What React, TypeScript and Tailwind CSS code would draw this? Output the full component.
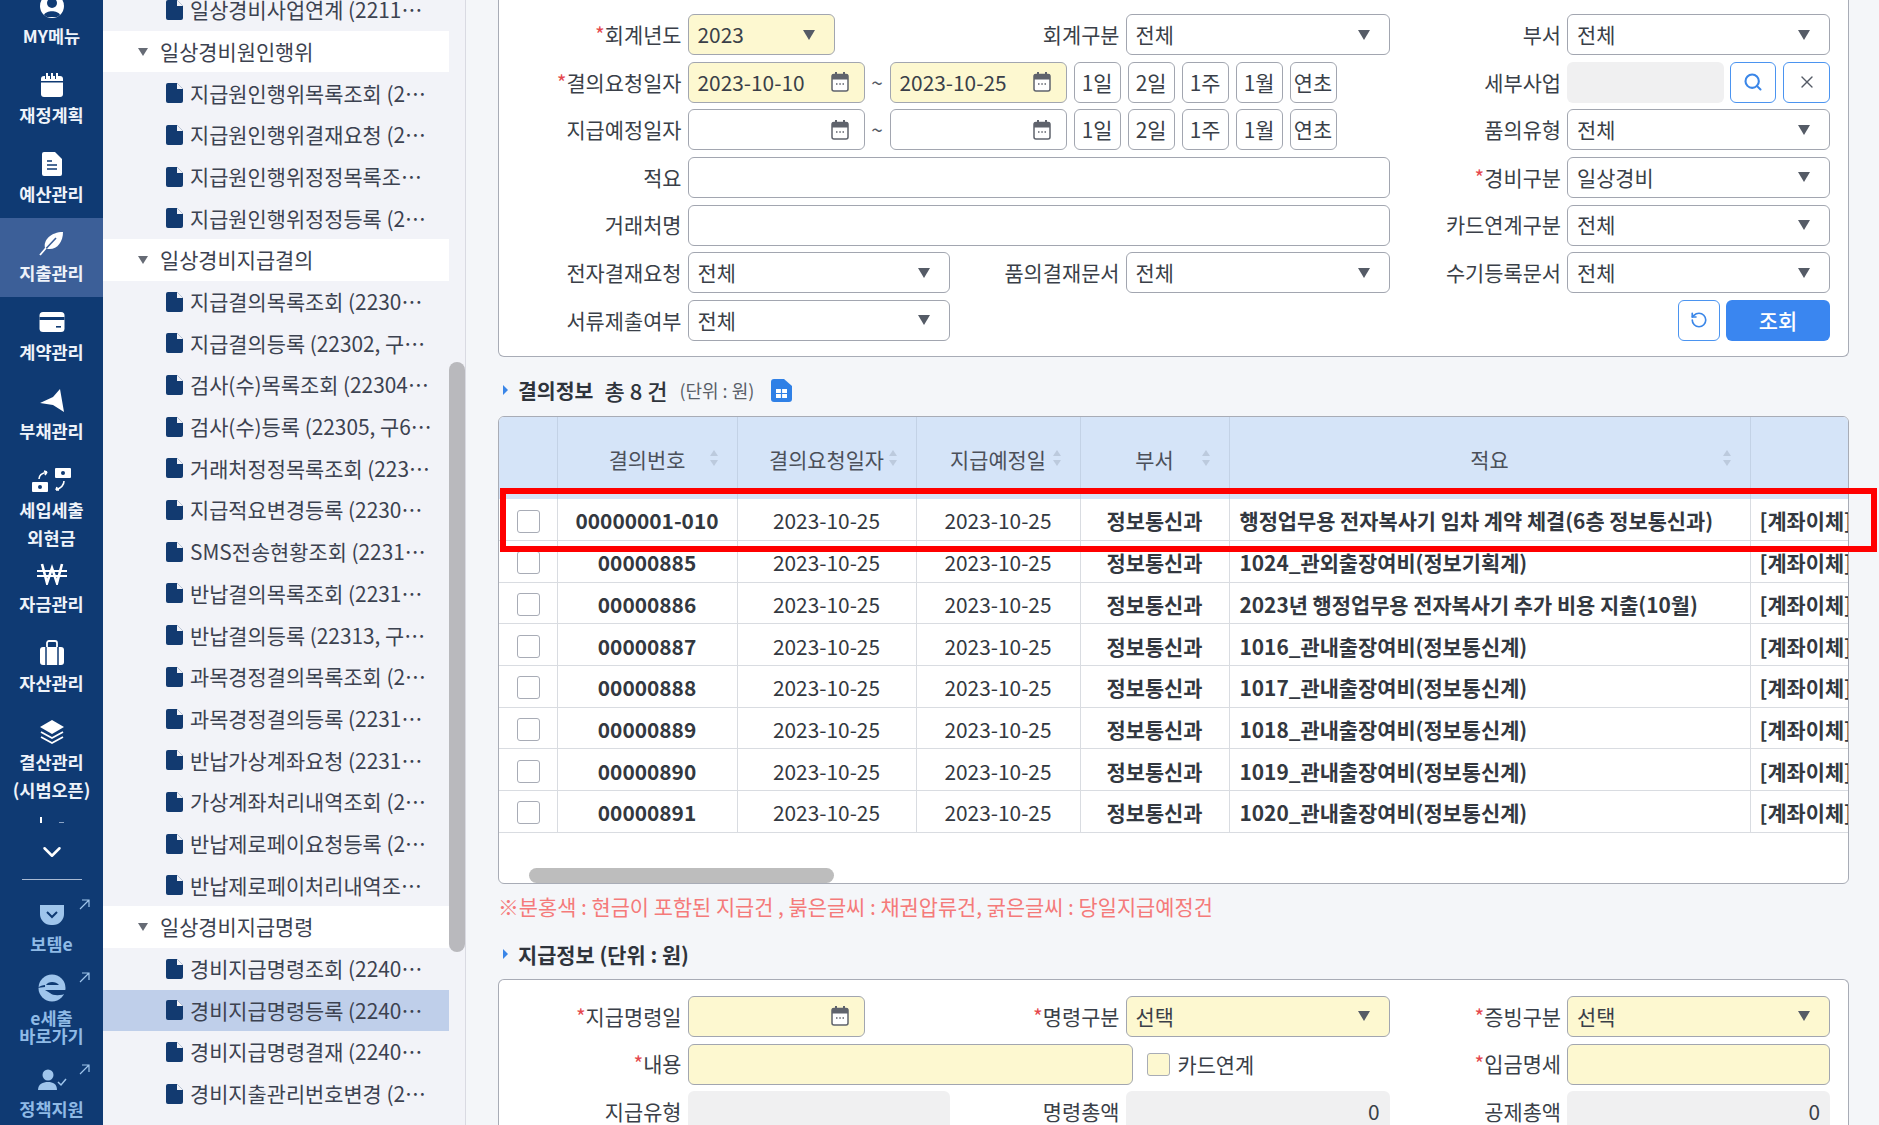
import type { ReactNode } from "react";
import { ChevronDown, RotateCcw, Search, X } from "lucide-react";

// left navigation icons, drawn to match the app's own icon set
function MyIcon() {
  return (
    <svg width="24" height="26" viewBox="0 0 24 26">
      <circle cx="12" cy="13" r="12" fill="#fff" />
      <circle cx="12" cy="10" r="5" fill="#0f3a73" />
      <path d="M4 22c2-5 14-5 16 0l-3 2H7z" fill="#0f3a73" />
    </svg>
  );
}

function PlanIcon() {
  return (
    <svg width="24" height="26" viewBox="0 0 24 26">
      <rect x="1" y="4" width="22" height="21" rx="3" fill="#fff" />
      <rect x="1" y="9" width="22" height="1.5" fill="#0f3a73" />
      <path d="M7 1v6M12 1v6M17 1v6" stroke="#fff" strokeWidth="2" />
      <path d="M5.5 4v3M10.5 4v3M15.5 4v3" stroke="#0f3a73" strokeWidth="1" />
    </svg>
  );
}

function BudgetIcon() {
  return (
    <svg width="22" height="26" viewBox="0 0 22 26">
      <path d="M3 1h11l7 7v15a2 2 0 0 1-2 2H3a2 2 0 0 1-2-2V3a2 2 0 0 1 2-2z" fill="#fff" />
      <path d="M6 10h5M6 14h10M6 18h10" stroke="#0f3a73" strokeWidth="1.6" />
    </svg>
  );
}

function FeatherIcon() {
  return (
    <svg width="26" height="26" viewBox="0 0 26 26">
      <path d="M6 18C4 10 12 2 24 2c0 10-6 18-15 17z" fill="#fff" />
      <path d="M1 25 17 8" stroke="#3c5f98" strokeWidth="1.6" />
      <path d="M1 25l6-7" stroke="#fff" strokeWidth="1.8" />
    </svg>
  );
}

function CardIcon() {
  return (
    <svg width="26" height="22" viewBox="0 0 26 22">
      <rect x="0.5" y="1" width="25" height="20" rx="3.5" fill="#fff" />
      <rect x="0.5" y="6" width="25" height="3" fill="#0f3a73" />
      <rect x="17" y="15" width="5" height="1.6" fill="#0f3a73" />
    </svg>
  );
}

function PlaneIcon() {
  return (
    <svg width="26" height="26" viewBox="0 0 26 26">
      <path d="M1 15 14 9 21 1 25 24 14 17z" fill="#fff" />
    </svg>
  );
}

function ExchangeIcon() {
  return (
    <svg width="42" height="26" viewBox="0 0 42 26">
      <rect x="24" y="1" width="16" height="10" rx="1" fill="#fff" />
      <circle cx="32" cy="6" r="2" fill="#0f3a73" />
      <rect x="1" y="15" width="16" height="10" rx="1" fill="#fff" />
      <circle cx="9" cy="20" r="2" fill="#0f3a73" />
      <path d="M8 12c0-4 3-6 8-7M16 5l-3-1M16 5l-2 3M33 14c0 4-3 7-8 9M25 23l3 0M25 23l1-3" stroke="#fff" strokeWidth="1.6" fill="none" />
    </svg>
  );
}

function WonIcon() {
  return (
    <svg width="30" height="22" viewBox="0 0 30 22">
      <path d="M5 1l5 19 5-15 5 15 5-19" stroke="#fff" strokeWidth="2.6" fill="none" />
      <path d="M0 8h30M0 13h30" stroke="#fff" strokeWidth="2" />
    </svg>
  );
}

function CaseIcon() {
  return (
    <svg width="26" height="26" viewBox="0 0 26 26">
      <path d="M8 7V3a2 2 0 0 1 2-2h6a2 2 0 0 1 2 2v4" stroke="#fff" strokeWidth="1.8" fill="none" />
      <rect x="1" y="7" width="24" height="18" rx="3" fill="#fff" />
      <path d="M7 7v18M19 7v18" stroke="#0f3a73" strokeWidth="1.5" />
    </svg>
  );
}

function LayersIcon() {
  return (
    <svg width="26" height="26" viewBox="0 0 26 26">
      <path d="M13 1 25 8 13 15 1 8z" fill="#fff" />
      <path d="M2 13l11 6 11-6M2 18l11 6 11-6" stroke="#fff" strokeWidth="1.8" fill="none" />
    </svg>
  );
}

function PocketIcon() {
  return (
    <svg width="26" height="22" viewBox="0 0 26 22">
      <path d="M1 1h24v9a11 11 0 0 1-11 11h-2A11 11 0 0 1 1 10z" fill="#9fc5ec" />
      <path d="M8 8l5 5 5-5" stroke="#0f3a73" strokeWidth="2" fill="none" />
    </svg>
  );
}

function ELogoIcon() {
  return (
    <svg width="30" height="28" viewBox="0 0 30 28">
      <circle cx="15" cy="14" r="13.5" fill="#9fc5ec" />
      <path d="M9 11c2-4 10-4 13 0z" fill="#0f3a73" />
      <path d="M8 16h22v3c-6 3-14 3-17 0z" fill="#0f3a73" />
      <path d="M0 14c3-2 6-3 8-3v2z" fill="#0f3a73" />
    </svg>
  );
}

function PersonCheckIcon() {
  return (
    <svg width="30" height="24" viewBox="0 0 30 24">
      <circle cx="11" cy="7" r="5.5" fill="#9fc5ec" />
      <path d="M1 22c0-6 5-8 10-8s9 2 9 8z" fill="#9fc5ec" />
      <path d="M21 14l3 3 5-6" stroke="#9fc5ec" strokeWidth="1.5" fill="none" />
    </svg>
  );
}

function ArrowOut() {
  return (
    <svg width="11" height="11" viewBox="0 0 11 11" className="absolute right-[13px] top-0">
      <path d="M1 10 10 1M3 1h7v7" stroke="#9fc5ec" strokeWidth="1.2" fill="none" />
    </svg>
  );
}

const navItems: { label: string[]; icon: ReactNode; active?: boolean }[] = [
  { label: ["MY메뉴"], icon: <MyIcon /> },
  { label: ["재정계획"], icon: <PlanIcon /> },
  { label: ["예산관리"], icon: <BudgetIcon /> },
  { label: ["지출관리"], icon: <FeatherIcon />, active: true },
  { label: ["계약관리"], icon: <CardIcon /> },
  { label: ["부채관리"], icon: <PlaneIcon /> },
  { label: ["세입세출", "외현금"], icon: <ExchangeIcon /> },
  { label: ["자금관리"], icon: <WonIcon /> },
  { label: ["자산관리"], icon: <CaseIcon /> },
  { label: ["결산관리", "(시범오픈)"], icon: <LayersIcon /> },
];

function Sidebar() {
  return (
    <aside className="w-[103px] shrink-0 bg-[#0f3a73] text-center text-[17.5px] font-bold text-[#eef3fa]">
      <div className="-mt-[19px]">
        {navItems.map((item) => (
          <div
            key={item.label[0]}
            className={`pt-[9px] ${item.label.length > 1 ? "h-[94px]" : "h-[79px]"} ${item.active ? "bg-[#3c5f98]" : ""}`}
          >
            <div className="flex h-[32px] items-center justify-center">{item.icon}</div>
            {item.label.map((line) => (
              <div key={line} className="leading-[28px] whitespace-nowrap">
                {line}
              </div>
            ))}
          </div>
        ))}
      </div>
      {/* cut off next menu item */}
      <div className="flex h-[14px] justify-center gap-[17px] pt-[16px]">
        <span className="h-[6px] w-[2px] bg-white" />
        <span className="mt-[5px] h-px w-[5px] bg-[#8aa3c5]" />
      </div>
      <div className="mt-[20px] flex justify-center">
        <ChevronDown size={30} strokeWidth={2} className="text-white" />
      </div>
      <div className="mx-auto mt-[12px] h-px w-[60px] bg-[#a9bad3]" />
      <div className="text-[#8fbae6]">
        <div className="relative mt-[19px]">
          <ArrowOut />
          <div className="flex h-[32px] items-center justify-center">
            <PocketIcon />
          </div>
          <div className="leading-[26px]">보템e</div>
        </div>
        <div className="relative mt-[15px]">
          <ArrowOut />
          <div className="flex h-[32px] items-center justify-center">
            <ELogoIcon />
          </div>
          <div className="mt-[5px] leading-[18px]">e세출</div>
          <div className="leading-[18px]">바로가기</div>
        </div>
        <div className="relative mt-[19px]">
          <ArrowOut />
          <div className="flex h-[32px] items-center justify-center">
            <PersonCheckIcon />
          </div>
          <div className="leading-[26px]">정책지원</div>
        </div>
      </div>
    </aside>
  );
}

type TreeRow = { text: string; group?: boolean; selected?: boolean };

const treeRows: TreeRow[] = [
  { text: "일상경비사업연계 (2211⋯" },
  { text: "일상경비원인행위", group: true },
  { text: "지급원인행위목록조회 (2⋯" },
  { text: "지급원인행위결재요청 (2⋯" },
  { text: "지급원인행위정정목록조⋯" },
  { text: "지급원인행위정정등록 (2⋯" },
  { text: "일상경비지급결의", group: true },
  { text: "지급결의목록조회 (2230⋯" },
  { text: "지급결의등록 (22302, 구⋯" },
  { text: "검사(수)목록조회 (22304⋯" },
  { text: "검사(수)등록 (22305, 구6⋯" },
  { text: "거래처정정목록조회 (223⋯" },
  { text: "지급적요변경등록 (2230⋯" },
  { text: "SMS전송현황조회 (2231⋯" },
  { text: "반납결의목록조회 (2231⋯" },
  { text: "반납결의등록 (22313, 구⋯" },
  { text: "과목경정결의목록조회 (2⋯" },
  { text: "과목경정결의등록 (2231⋯" },
  { text: "반납가상계좌요청 (2231⋯" },
  { text: "가상계좌처리내역조회 (2⋯" },
  { text: "반납제로페이요청등록 (2⋯" },
  { text: "반납제로페이처리내역조⋯" },
  { text: "일상경비지급명령", group: true },
  { text: "경비지급명령조회 (2240⋯" },
  { text: "경비지급명령등록 (2240⋯", selected: true },
  { text: "경비지급명령결재 (2240⋯" },
  { text: "경비지출관리번호변경 (2⋯" },
];

function TreePanel() {
  return (
    <div className="flex w-[363px] shrink-0 border-r border-[#d9dae2] bg-[#f2f3f8]">
      <div className="-mt-[11px] w-[346px] shrink-0">
        {treeRows.map((row) =>
          row.group ? (
            <div key={row.text} className="flex h-[41.7px] items-center bg-white pl-[35px] text-[#3c4250]">
              <span className="mr-[12px] h-0 w-0 border-x-[5.5px] border-t-[8px] border-x-transparent border-t-[#666b75]" />
              <span>{row.text}</span>
            </div>
          ) : (
            <div
              key={row.text}
              className={`flex h-[41.7px] items-center pl-[63px] whitespace-nowrap text-[#3c4250] ${row.selected ? "bg-[#bfcfea]" : ""}`}
            >
              <svg width="17" height="20" viewBox="0 0 17 20" className="mr-[7px] shrink-0">
                <path d="M2 0h9l6 6v12a2 2 0 0 1-2 2H2a2 2 0 0 1-2-2V2a2 2 0 0 1 2-2z" fill="#123a70" />
                <path d="M11 0v6h6" fill="#f2f3f8" />
              </svg>
              <span>{row.text}</span>
            </div>
          ),
        )}
      </div>
      <div className="flex-1 pt-[362px]">
        <div className="h-[590px] rounded-full bg-[#b9b9bd]" />
      </div>
    </div>
  );
}

function Label({ children, width, required }: { children: ReactNode; width: string; required?: boolean }) {
  return (
    <div className={`${width} shrink-0 pr-[6px] text-right whitespace-nowrap text-[#3a3f48]`}>
      {required && <span className="text-[#e5484d]">*</span>}
      {children}
    </div>
  );
}

function Caret() {
  return <span className="h-0 w-0 border-x-[6.5px] border-t-[10px] border-x-transparent border-t-[#555b66]" />;
}

function Select({ value, width, yellow }: { value: string; width: string; yellow?: boolean }) {
  return (
    <div
      className={`${width} flex h-[41px] shrink-0 items-center justify-between rounded-[6px] border-[1.5px] border-[#a2a6b0] pr-[19px] pl-[9px] text-[#3a3f48] ${yellow ? "bg-[#fdf8d0]" : "bg-white"}`}
    >
      <span>{value}</span>
      <Caret />
    </div>
  );
}

function CalendarIcon() {
  return (
    <svg width="18" height="20" viewBox="0 0 18 20">
      <rect x="4" y="0" width="2" height="4" fill="#5f636c" />
      <rect x="12" y="0" width="2" height="4" fill="#5f636c" />
      <rect x="1" y="2.5" width="16" height="16.5" rx="2" fill="#fff" stroke="#5f636c" strokeWidth="1.5" />
      <rect x="1" y="2.5" width="16" height="5" fill="#5f636c" />
      <path d="M5 12h1.5M8.3 12h1.5M11.5 12h1.5" stroke="#5f636c" strokeWidth="1.5" />
    </svg>
  );
}

function DateField({ value, yellow }: { value?: string; yellow?: boolean }) {
  return (
    <div
      className={`flex h-[41px] w-[177px] shrink-0 items-center justify-between rounded-[6px] border-[1.5px] border-[#a2a6b0] pr-[15px] pl-[9px] whitespace-nowrap text-[#3a3f48] ${yellow ? "bg-[#fdf8d0]" : "bg-white"}`}
    >
      <span>{value}</span>
      <CalendarIcon />
    </div>
  );
}

function DateRange({ from, to, yellow }: { from?: string; to?: string; yellow?: boolean }) {
  return (
    <>
      <DateField value={from} yellow={yellow} />
      <span className="w-[25px] shrink-0 text-center text-[#555b66]">~</span>
      <DateField value={to} yellow={yellow} />
      <div className="ml-[7px] flex gap-[7px]">
        {["1일", "2일", "1주", "1월", "연초"].map((t) => (
          <div
            key={t}
            className="flex h-[41px] w-[47px] items-center justify-center rounded-[6px] border-[1.5px] border-[#a2a6b0] bg-white whitespace-nowrap text-[#3a3f48]"
          >
            {t}
          </div>
        ))}
      </div>
    </>
  );
}

function TextField({ width, yellow }: { width: string; yellow?: boolean }) {
  return (
    <div
      className={`${width} h-[41px] shrink-0 rounded-[6px] border-[1.5px] border-[#a2a6b0] ${yellow ? "bg-[#fdf8d0]" : "bg-white"}`}
    />
  );
}

function Disabled({ width, value }: { width: string; value?: string }) {
  return (
    <div className={`${width} h-[41px] shrink-0 rounded-[6px] bg-[#f0f0f1] pr-[10px] text-right leading-[41px] text-[#3a3f48]`}>
      {value}
    </div>
  );
}

function Row({ children, right }: { children: ReactNode; right?: ReactNode }) {
  return (
    <div className="flex h-[41px] items-center">
      {children}
      <div className="ml-auto flex items-center">{right}</div>
    </div>
  );
}

function RightField({ label, required, children }: { label: string; required?: boolean; children: ReactNode }) {
  return (
    <>
      <Label width="w-[176px]" required={required}>
        {label}
      </Label>
      {children}
    </>
  );
}

function SearchPanel() {
  return (
    <div className="flex flex-col gap-[6.67px] rounded-b-[6px] border-[1.5px] border-t-0 border-[#a8acb6] bg-white pt-[14px] pr-[18px] pb-[15px]">
      <Row right={<RightField label="부서"><Select value="전체" width="w-[263px]" /></RightField>}>
        <Label width="w-[188.5px]" required>회계년도</Label>
        <Select value="2023" width="w-[147px]" yellow />
        <Label width="w-[291px]">회계구분</Label>
        <Select value="전체" width="w-[264px]" />
      </Row>
      <Row
        right={
          <RightField label="세부사업">
            <Disabled width="w-[157px]" />
            <div className="ml-[6px] flex h-[41px] w-[46px] items-center justify-center rounded-[6px] border-[1.5px] border-[#4b94f0] bg-white">
              <Search size={20} strokeWidth={2.5} className="text-[#3a86e8]" />
            </div>
            <div className="ml-[7px] flex h-[41px] w-[47px] items-center justify-center rounded-[6px] border-[1.5px] border-[#4b94f0] bg-white">
              <X size={20} strokeWidth={1.6} className="text-[#555b66]" />
            </div>
          </RightField>
        }
      >
        <Label width="w-[188.5px]" required>결의요청일자</Label>
        <DateRange from="2023-10-10" to="2023-10-25" yellow />
      </Row>
      <Row right={<RightField label="품의유형"><Select value="전체" width="w-[263px]" /></RightField>}>
        <Label width="w-[188.5px]">지급예정일자</Label>
        <DateRange />
      </Row>
      <Row right={<RightField label="경비구분" required><Select value="일상경비" width="w-[263px]" /></RightField>}>
        <Label width="w-[188.5px]">적요</Label>
        <TextField width="w-[702px]" />
      </Row>
      <Row right={<RightField label="카드연계구분"><Select value="전체" width="w-[263px]" /></RightField>}>
        <Label width="w-[188.5px]">거래처명</Label>
        <TextField width="w-[702px]" />
      </Row>
      <Row right={<RightField label="수기등록문서"><Select value="전체" width="w-[263px]" /></RightField>}>
        <Label width="w-[188.5px]">전자결재요청</Label>
        <Select value="전체" width="w-[262px]" />
        <Label width="w-[176px]">품의결재문서</Label>
        <Select value="전체" width="w-[264px]" />
      </Row>
      <Row
        right={
          <>
            <div className="flex h-[41px] w-[42px] items-center justify-center rounded-[6px] border-[1.5px] border-[#4b94f0] bg-white">
              <RotateCcw size={18} strokeWidth={2.2} className="text-[#3a86e8]" />
            </div>
            <div className="ml-[6px] flex h-[41px] w-[104px] items-center justify-center rounded-[6px] bg-[#3a86f0] font-medium text-white">
              조회
            </div>
          </>
        }
      >
        <Label width="w-[188.5px]">서류제출여부</Label>
        <Select value="전체" width="w-[262px]" />
      </Row>
    </div>
  );
}

function SectionMark() {
  return <span className="mr-[10px] h-0 w-0 border-y-[5px] border-l-[5px] border-y-transparent border-l-[#3a86e8]" />;
}

function SortArrows() {
  return (
    <svg width="10" height="20" viewBox="0 0 10 20" className="absolute top-1/2 right-[18px] -translate-y-1/2">
      <path d="M5 2 9 8H1z" fill="#bccadd" />
      <path d="M5 18 1 12h8z" fill="#bccadd" />
    </svg>
  );
}

const columns = ["결의번호", "결의요청일자", "지급예정일", "부서", "적요"];

const rows = [
  ["00000001-010", "행정업무용 전자복사기 임차 계약 체결(6층 정보통신과)"],
  ["00000885", "1024_관외출장여비(정보기획계)"],
  ["00000886", "2023년 행정업무용 전자복사기 추가 비용 지출(10월)"],
  ["00000887", "1016_관내출장여비(정보통신계)"],
  ["00000888", "1017_관내출장여비(정보통신계)"],
  ["00000889", "1018_관내출장여비(정보통신계)"],
  ["00000890", "1019_관내출장여비(정보통신계)"],
  ["00000891", "1020_관내출장여비(정보통신계)"],
];

function DataTable() {
  return (
    <div className="h-[468px] overflow-hidden rounded-[6px] border-[1.5px] border-[#a8acb6] bg-white">
      <div className="h-[416px] overflow-hidden">
        <table className="w-[1449px] table-fixed border-collapse">
          <colgroup>
            <col className="w-[58px]" />
            <col className="w-[180px]" />
            <col className="w-[179px]" />
            <col className="w-[164px]" />
            <col className="w-[149px]" />
            <col className="w-[521px]" />
            <col className="w-[198px]" />
          </colgroup>
          <thead>
            <tr className="h-[82px] bg-[#d5e4f8] text-[#4b505a]">
              <th className="border-r border-[#c3d2e6]" />
              {columns.map((c) => (
                <th key={c} className="relative border-r border-[#c3d2e6] pt-[3px] font-normal">
                  {c}
                  <SortArrows />
                </th>
              ))}
              <th />
            </tr>
          </thead>
          <tbody className="text-[#333840]">
            {rows.map(([no, memo]) => (
              <tr key={no} className="h-[41.67px] border-b-[1.5px] border-[#d9dce1] whitespace-nowrap">
                <td className="border-r border-[#d9dce1] pt-[3px]">
                  <div className="mx-auto h-[23px] w-[23px] translate-x-px rounded-[3px] border-[1.5px] border-[#a8acb6] bg-white" />
                </td>
                <td className="border-r border-[#d9dce1] pt-[3px] text-center font-bold">{no}</td>
                <td className="border-r border-[#d9dce1] pt-[3px] text-center">2023-10-25</td>
                <td className="border-r border-[#d9dce1] pt-[3px] text-center">2023-10-25</td>
                <td className="border-r border-[#d9dce1] pt-[3px] text-center font-bold">정보통신과</td>
                <td className="overflow-hidden border-r border-[#d9dce1] pt-[3px] pl-[10px] font-bold">{memo}</td>
                <td className="pt-[3px] pl-[9px] font-bold">[계좌이체]</td>
              </tr>
            ))}
          </tbody>
        </table>
      </div>
      <div className="mt-[35px] ml-[30px] h-[15px] w-[305px] rounded-full bg-[#bdbdbd]" />
    </div>
  );
}

function PaymentPanel() {
  return (
    <div className="flex flex-col gap-[6.67px] rounded-t-[6px] border-[1.5px] border-b-0 border-[#a8acb6] bg-white pt-[16px] pr-[18px]">
      <Row right={<RightField label="증빙구분" required><Select value="선택" width="w-[263px]" yellow /></RightField>}>
        <Label width="w-[188.5px]" required>지급명령일</Label>
        <DateField yellow />
        <Label width="w-[261px]" required>명령구분</Label>
        <Select value="선택" width="w-[264px]" yellow />
      </Row>
      <Row right={<RightField label="입금명세" required><TextField width="w-[263px]" yellow /></RightField>}>
        <Label width="w-[188.5px]" required>내용</Label>
        <TextField width="w-[445px]" yellow />
        <div className="ml-[14px] h-[23px] w-[23px] rounded-[3px] border-[1.5px] border-[#a8acb6] bg-[#fdf8d0]" />
        <span className="mt-[2px] ml-[8px] text-[#3a3f48]">카드연계</span>
      </Row>
      <Row right={<RightField label="공제총액"><Disabled width="w-[263px]" value="0" /></RightField>}>
        <Label width="w-[188.5px]">지급유형</Label>
        <Disabled width="w-[262px]" />
        <Label width="w-[176px]">명령총액</Label>
        <Disabled width="w-[264px]" value="0" />
      </Row>
    </div>
  );
}

export default function App() {
  return (
    <div className="relative flex h-[1125px] w-full overflow-hidden bg-[#f4f6f9] font-['Noto_Sans_CJK_KR',sans-serif] text-[20.85px] leading-normal">
      <Sidebar />
      <TreePanel />
      <main className="ml-[32px] w-[1351px] shrink-0">
        <SearchPanel />
        <div className="flex h-[59px] items-center pt-[8px] pl-[5px] text-[#2f343c]">
          <SectionMark />
          <span className="text-[20.5px] font-bold">결의정보</span>
          <span className="ml-[11px] text-[22px] font-medium">총 8 건</span>
          <span className="ml-[12px] text-[18px] text-[#5a5f68]">(단위 : 원)</span>
          <svg width="21" height="23" viewBox="0 0 21 23" className="ml-[17px]">
            <path d="M3 0h10l8 7v13a3 3 0 0 1-3 3H3a3 3 0 0 1-3-3V3a3 3 0 0 1 3-3z" fill="#2f80e6" />
            <rect x="5" y="10" width="11" height="9" fill="#fff" />
            <path d="M5 14.5h11M10.5 10v9" stroke="#2f80e6" strokeWidth="1.2" />
          </svg>
        </div>
        <DataTable />
        <div className="flex h-[46px] items-center text-[#f47a7a]">
          ※분홍색 : 현금이 포함된 지급건 , 붉은글씨 : 채권압류건, 굵은글씨 : 당일지급예정건
        </div>
        <div className="flex h-[49px] items-center pl-[5px] text-[#2f343c]">
          <SectionMark />
          <span className="font-bold">지급정보 (단위 : 원)</span>
        </div>
        <PaymentPanel />
      </main>
      {/* red highlight drawn over the first row */}
      <div className="absolute top-[488px] left-[500px] h-[64px] w-[1377px] border-[6px] border-[#ff0000]" />
    </div>
  );
}
